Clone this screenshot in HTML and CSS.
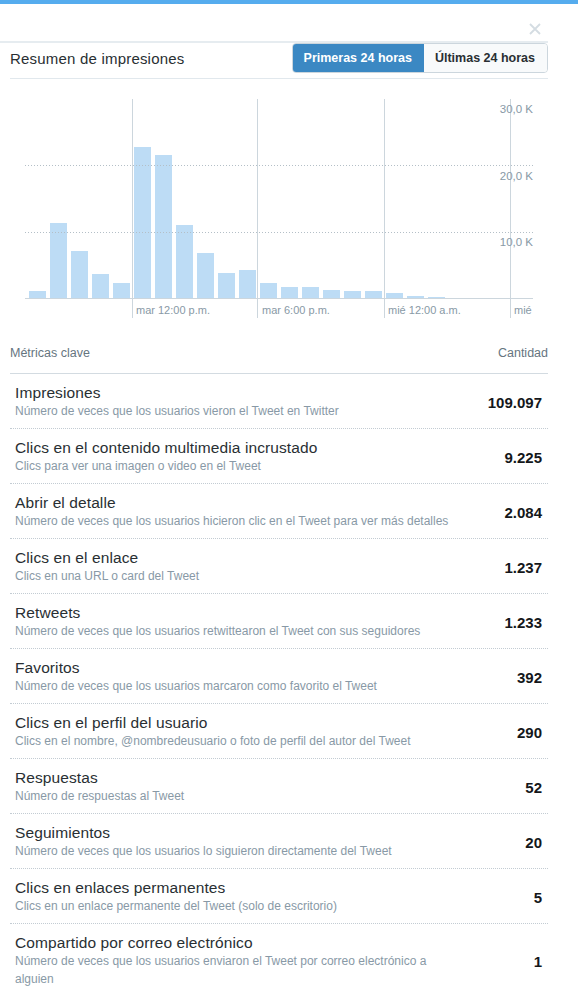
FILE: index.html
```html
<!DOCTYPE html>
<html lang="es">
<head>
<meta charset="utf-8">
<title>Resumen de impresiones</title>
<link rel="stylesheet" href="styles.css">
</head>
<body>
<div class="topbar"></div>
<div class="close-row">
  <svg class="close" width="12" height="12" viewBox="0 0 12 12"><path d="M1 1L11 11M11 1L1 11" stroke="#d4dce2" stroke-width="1.8" fill="none"/></svg>
</div>
<div class="panel">
  <div class="header">
    <h2 class="title">Resumen de impresiones</h2>
    <div class="toggle">
      <span class="tab active">Primeras 24 horas</span>
      <span class="tab">Últimas 24 horas</span>
    </div>
  </div>
  <svg class="chart" width="548" height="256" viewBox="0 0 548 256">
    <g class="bars" fill="#bddcf5">
      <rect x="29" y="212" width="17" height="7"/>
      <rect x="50" y="144" width="17" height="75"/>
      <rect x="71" y="172" width="17" height="47"/>
      <rect x="92" y="195" width="17" height="24"/>
      <rect x="113" y="204" width="17" height="15"/>
      <rect x="134" y="68" width="17" height="151"/>
      <rect x="155" y="76" width="17" height="143"/>
      <rect x="176" y="146" width="17" height="73"/>
      <rect x="197" y="174" width="17" height="45"/>
      <rect x="218" y="194" width="17" height="25"/>
      <rect x="239" y="191" width="17" height="28"/>
      <rect x="260" y="204" width="17" height="15"/>
      <rect x="281" y="208" width="17" height="11"/>
      <rect x="302" y="208" width="17" height="11"/>
      <rect x="323" y="211" width="17" height="8"/>
      <rect x="344" y="212" width="17" height="7"/>
      <rect x="365" y="212" width="17" height="7"/>
      <rect x="386" y="214" width="17" height="5"/>
      <rect x="407" y="217" width="17" height="2"/>
      <rect x="428" y="218" width="17" height="1"/>
    </g>
    <g stroke="#b4bfc7" stroke-width="1" stroke-dasharray="1 2">
      <line x1="25" y1="86.5" x2="533" y2="86.5"/>
      <line x1="25" y1="153.5" x2="533" y2="153.5"/>
    </g>
    <g stroke="#ccd6dd" stroke-width="1">
      <line x1="132.5" y1="20" x2="132.5" y2="239"/>
      <line x1="257.5" y1="20" x2="257.5" y2="239"/>
      <line x1="384.5" y1="20" x2="384.5" y2="239"/>
      <line x1="510.5" y1="20" x2="510.5" y2="239"/>
      <line x1="25" y1="219.5" x2="533" y2="219.5"/>
    </g>
    <g class="ylabels" text-anchor="end">
      <text x="533" y="34">30,0 K</text>
      <text x="533" y="101">20,0 K</text>
      <text x="533" y="167">10,0 K</text>
    </g>
    <g class="xlabels">
      <text x="136" y="235">mar 12:00 p.m.</text>
      <text x="262" y="235">mar 6:00 p.m.</text>
      <text x="388" y="235">mié 12:00 a.m.</text>
      <text x="514" y="235">mié</text>
    </g>
  </svg>
  <div class="metrics">
    <div class="metrics-head">
      <span>Métricas clave</span>
      <span>Cantidad</span>
    </div>
    <div class="row">
      <div class="info"><div class="name">Impresiones</div><div class="desc">Número de veces que los usuarios vieron el Tweet en Twitter</div></div>
      <div class="value">109.097</div>
    </div>
    <div class="row">
      <div class="info"><div class="name">Clics en el contenido multimedia incrustado</div><div class="desc">Clics para ver una imagen o video en el Tweet</div></div>
      <div class="value">9.225</div>
    </div>
    <div class="row">
      <div class="info"><div class="name">Abrir el detalle</div><div class="desc">Número de veces que los usuarios hicieron clic en el Tweet para ver más detalles</div></div>
      <div class="value">2.084</div>
    </div>
    <div class="row">
      <div class="info"><div class="name">Clics en el enlace</div><div class="desc">Clics en una URL o card del Tweet</div></div>
      <div class="value">1.237</div>
    </div>
    <div class="row">
      <div class="info"><div class="name">Retweets</div><div class="desc">Número de veces que los usuarios retwittearon el Tweet con sus seguidores</div></div>
      <div class="value">1.233</div>
    </div>
    <div class="row">
      <div class="info"><div class="name">Favoritos</div><div class="desc">Número de veces que los usuarios marcaron como favorito el Tweet</div></div>
      <div class="value">392</div>
    </div>
    <div class="row">
      <div class="info"><div class="name">Clics en el perfil del usuario</div><div class="desc">Clics en el nombre, @nombredeusuario o foto de perfil del autor del Tweet</div></div>
      <div class="value">290</div>
    </div>
    <div class="row">
      <div class="info"><div class="name">Respuestas</div><div class="desc">Número de respuestas al Tweet</div></div>
      <div class="value">52</div>
    </div>
    <div class="row">
      <div class="info"><div class="name">Seguimientos</div><div class="desc">Número de veces que los usuarios lo siguieron directamente del Tweet</div></div>
      <div class="value">20</div>
    </div>
    <div class="row">
      <div class="info"><div class="name">Clics en enlaces permanentes</div><div class="desc">Clics en un enlace permanente del Tweet (solo de escritorio)</div></div>
      <div class="value">5</div>
    </div>
    <div class="row last">
      <div class="info"><div class="name">Compartido por correo electrónico</div><div class="desc">Número de veces que los usuarios enviaron el Tweet por correo electrónico a alguien</div></div>
      <div class="value">1</div>
    </div>
  </div>
</div>
</body>
</html>
```
FILE: styles.css
```css
* { box-sizing: border-box; }

html, body {
  margin: 0;
  padding: 0;
  background: #ffffff;
}

body {
  width: 578px;
  font-family: "Liberation Sans", Arial, Helvetica, sans-serif;
  color: #292f33;
}

.topbar {
  height: 4px;
  background: #55acee;
}

.close-row {
  height: 37px;
  display: flex;
  justify-content: flex-end;
  align-items: flex-start;
  padding-top: 19px;
  padding-right: 37px;
}

.close { display: block; }

.panel {
  width: 548px;
  border-top: 2px solid #e6ecf0;
}

.header {
  margin-left: 10px;
  height: 36px;
  display: flex;
  justify-content: space-between;
  align-items: flex-start;
  border-bottom: 1px solid #e1e8ed;
}

.title {
  margin: 0;
  padding-top: 1px;
  font-size: 15px;
  line-height: 30px;
  font-weight: normal;
  letter-spacing: 0.2px;
  color: #292f33;
}

.toggle {
  display: flex;
  height: 30px;
  border: 1px solid #ccd6dd;
  border-radius: 4px;
  overflow: hidden;
}

.tab {
  display: flex;
  align-items: center;
  padding: 0 12px 0 11px;
  font-size: 12.5px;
  font-weight: bold;
  color: #292f33;
  background: #f8fafb;
}

.tab.active {
  background: #3b88c3;
  color: #ffffff;
  padding: 0 12px 0 11px;
}

.chart {
  display: block;
}

.ylabels text {
  font-family: "Liberation Sans", Arial, sans-serif;
  font-size: 11.5px;
  fill: #8899a6;
}

.xlabels text {
  font-family: "Liberation Sans", Arial, sans-serif;
  font-size: 11px;
  fill: #8899a6;
}

.metrics {
  margin-left: 10px;
}

.metrics-head {
  display: flex;
  justify-content: space-between;
  padding: 10px 0 12px;
  font-size: 12.5px;
  line-height: 16px;
  color: #66757f;
  border-bottom: 1px solid #d3dbe1;
}

.row {
  display: flex;
  align-items: center;
  justify-content: space-between;
  padding: 10px 6px 8px 5px;
  border-bottom: 1px dotted #c3ccd3;
}

.row.last {
  border-bottom: none;
}

.info {
  width: 440px;
}

.name {
  font-size: 15.5px;
  line-height: 18px;
  letter-spacing: 0.1px;
  color: #292f33;
}

.desc {
  font-size: 12px;
  line-height: 18px;
  color: #8899a6;
}

.value {
  font-size: 15px;
  font-weight: bold;
  color: #14171a;
}
```
